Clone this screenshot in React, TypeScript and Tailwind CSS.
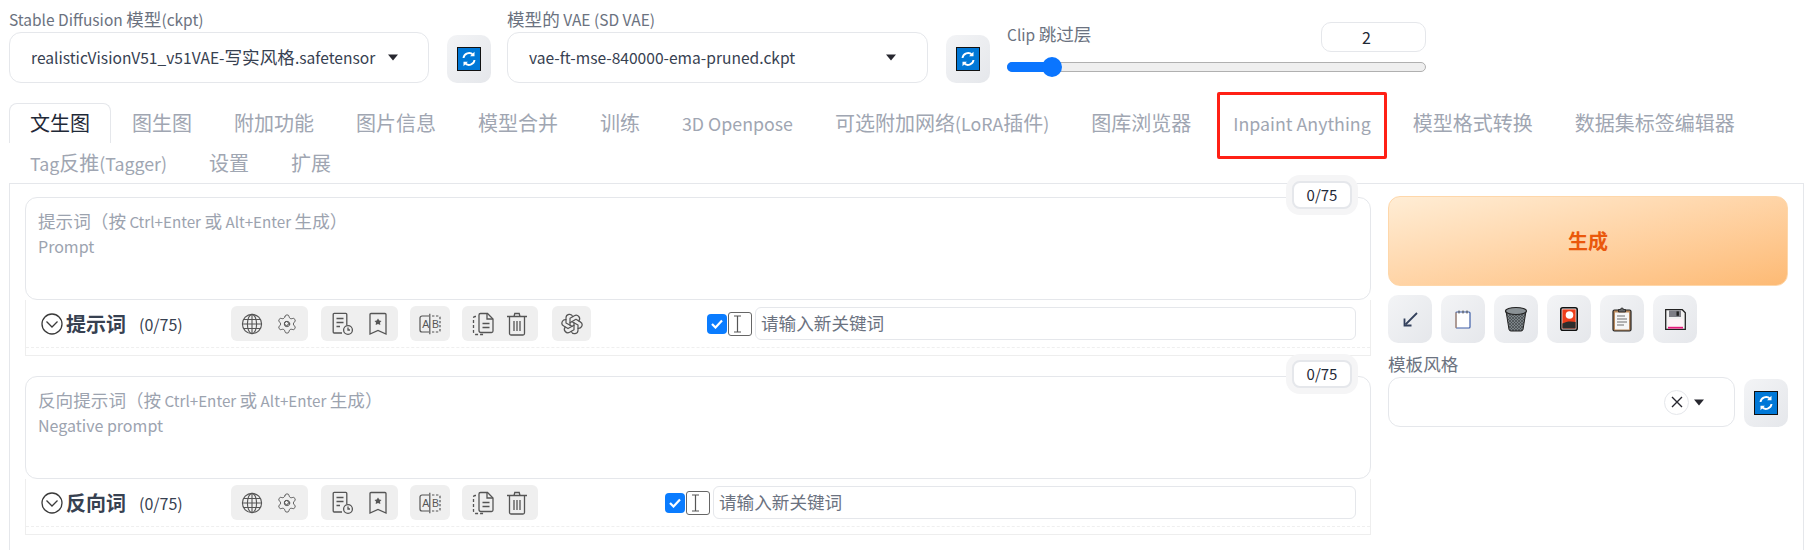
import React from "react";
import { TbBrandOpenai } from "react-icons/tb";
import { Settings } from "lucide-react";

const tabsRow = [
  "图生图",
  "附加功能",
  "图片信息",
  "模型合并",
  "训练",
  "3D Openpose",
  "可选附加网络(LoRA插件)",
  "图库浏览器",
];

// the screenshot's CJK glyphs run about 10% bigger than the latin ones
function Mixed({ text, cjk }: { text: string; cjk: string }) {
  const parts = text.split(/([\u3000-\u9fff\uff00-\uffef]+)/);
  return (
    <>
      {parts.map((part, i) =>
        i % 2 === 1 ? (
          <span key={i} className={cjk}>
            {part}
          </span>
        ) : (
          part
        ),
      )}
    </>
  );
}

function RefreshEmoji() {
  return (
    <svg width="24" height="24" viewBox="0 0 24 24">
      <rect x="0.5" y="0.5" width="23" height="23" fill="#0078d7" stroke="#111" />
      <path d="M6.5 11a5.6 5.6 0 0 1 9.6-3.2" fill="none" stroke="#fff" strokeWidth="1.9" />
      <path d="M17.5 4.8v4.4h-4.4z" fill="#fff" />
      <path d="M17.5 13a5.6 5.6 0 0 1-9.6 3.2" fill="none" stroke="#fff" strokeWidth="1.9" />
      <path d="M6.5 19.2v-4.4h4.4z" fill="#fff" />
    </svg>
  );
}

function Caret() {
  return (
    <svg width="12" height="7" viewBox="0 0 12 7">
      <path d="M1 0.5h10L6 6.5z" fill="#27272f" />
    </svg>
  );
}

function RefreshButton({ className }: { className: string }) {
  return (
    <button className={`flex h-[48px] w-[44px] shrink-0 items-center justify-center rounded-[10px] bg-gradient-to-br from-[#f3f4f6] to-[#e5e7eb] ${className}`}>
      <RefreshEmoji />
    </button>
  );
}

function GlobeIcon() {
  return (
    <svg width="22" height="22" viewBox="0 0 22 22" fill="none" stroke="#555" strokeWidth="1.1">
      <circle cx="11" cy="11" r="9.6" />
      <ellipse cx="11" cy="11" rx="4.6" ry="9.6" />
      <path d="M11 1.4v19.2M1.4 11h19.2M2.6 6.5h16.8M2.6 15.5h16.8" />
    </svg>
  );
}

function GearIcon() {
  return (
    <span className="relative flex h-[22px] w-[22px] items-center justify-center">
      <Settings size={26} strokeWidth={1} color="#555" />
      <span className="absolute h-[5px] w-[5px] rounded-full border border-[#555]" />
    </span>
  );
}

function HistoryIcon() {
  return (
    <svg width="22" height="24" viewBox="0 0 22 24" fill="none" stroke="#555" strokeWidth="1.3">
      <path d="M10 21H2.2a1 1 0 0 1-1-1V2.4a1 1 0 0 1 1-1h11.6a1 1 0 0 1 1 1V13" />
      <path d="M4.5 6.5h7M4.5 10.5h7M4.5 14.5h3.5" />
      <circle cx="16" cy="18" r="4.4" />
      <path d="M16 15.6V18h2" />
    </svg>
  );
}

function BookmarkIcon() {
  return (
    <svg width="18" height="24" viewBox="0 0 18 24" fill="none" stroke="#555" strokeWidth="1.3">
      <path d="M2 1.5h14a1 1 0 0 1 1 1V22l-8-3.6L1 22V2.5a1 1 0 0 1 1-1z" />
      <path d="M9 6.5l1.3 2 2.2.4-1.5 1.7.3 2.3-2.3-1-2.3 1 .3-2.3-1.5-1.7 2.2-.4z" fill="#555" stroke="none" />
    </svg>
  );
}

function AbIcon() {
  return (
    <svg width="22" height="22" viewBox="0 0 22 22" fill="none" stroke="#555" strokeWidth="1.2">
      <path d="M10 3H3a2 2 0 0 0-2 2v12a2 2 0 0 0 2 2h7" />
      <path d="M10.8 0.8v20.4" />
      <path d="M13 3h6.5a1.5 1.5 0 0 1 1.5 1.5v13a1.5 1.5 0 0 1-1.5 1.5H13" strokeDasharray="2.4 1.6" />
      <text x="3.2" y="14.8" fontSize="10.5" fontFamily="Liberation Sans" fill="#555" stroke="none">A</text>
      <text x="13" y="14.8" fontSize="10.5" fontFamily="Liberation Sans" fill="#555" stroke="none">B</text>
    </svg>
  );
}

function CopyIcon() {
  return (
    <svg width="22" height="24" viewBox="0 0 22 24" fill="none" stroke="#555" strokeWidth="1.3">
      <path d="M7 4.5V3a1.5 1.5 0 0 1 1.5-1.5h7L21 7v12a1.5 1.5 0 0 1-1.5 1.5H9A2 2 0 0 1 7 18.5V4.5z" />
      <path d="M15 1.5V7h6" />
      <path d="M4 4.5H3A1.5 1.5 0 0 0 1.5 6v14A2.5 2.5 0 0 0 4 22.5h9" strokeDasharray="3 2" />
      <path d="M10.5 11.5h7M10.5 15.5h7" />
    </svg>
  );
}

function TrashIcon() {
  return (
    <svg width="22" height="24" viewBox="0 0 22 24" fill="none" stroke="#555" strokeWidth="1.3">
      <path d="M1 4.5h20M8 4.5l.8-3h4.4l.8 3" />
      <path d="M3.5 4.5v17a1.5 1.5 0 0 0 1.5 1.5h12a1.5 1.5 0 0 0 1.5-1.5v-17" />
      <path d="M8 9v10M11 9v10M14 9v10" />
    </svg>
  );
}

function ArrowEmoji() {
  return (
    <svg width="15" height="15" viewBox="0 0 15 15" fill="none">
      <path d="M14 1L2.5 12.5" stroke="#33405c" strokeWidth="1.8" />
      <path d="M1.5 6.5V13.5H8.5" stroke="#33405c" strokeWidth="1.8" />
    </svg>
  );
}

function NotepadEmoji() {
  return (
    <svg width="16" height="19" viewBox="0 0 16 19" fill="none">
      <rect x="1" y="2" width="14" height="16" rx="1" fill="#fff" stroke="#3f5fa8" strokeWidth="1.2" />
      <path d="M1 18V2.5" stroke="#c79b73" strokeWidth="1.2" />
      <path d="M4 0.5v3M8 0.5v3M12 0.5v3" stroke="#444" strokeWidth="1" />
    </svg>
  );
}

function BasketEmoji() {
  return (
    <svg width="24" height="26" viewBox="0 0 24 26">
      <defs>
        <pattern id="mesh" width="3" height="3" patternUnits="userSpaceOnUse">
          <rect width="3" height="3" fill="#7d8488" />
          <path d="M0 0l3 3M3 0l-3 3" stroke="#3b3f42" strokeWidth="0.6" />
        </pattern>
      </defs>
      <path d="M2 5l3 18.5a2 2 0 0 0 2 1.5h10a2 2 0 0 0 2-1.5L22 5z" fill="url(#mesh)" stroke="#222" strokeWidth="1" />
      <ellipse cx="12" cy="5" rx="10.5" ry="3.5" fill="#8b9296" stroke="#222" strokeWidth="1.2" />
    </svg>
  );
}

function PictureEmoji() {
  return (
    <svg width="18" height="24" viewBox="0 0 18 24">
      <rect x="0.8" y="0.8" width="16.4" height="22.4" rx="2" fill="#e9eaec" stroke="#111" strokeWidth="1.6" />
      <rect x="2.4" y="2.4" width="13.2" height="19.2" fill="#ee3f1c" />
      <circle cx="9.5" cy="8" r="3.8" fill="#fff" />
      <path d="M2.4 16.5c4-2.5 9-2.5 13.2-1.5v6.6H2.4z" fill="#2d2d2d" />
    </svg>
  );
}

function ClipboardEmoji() {
  return (
    <svg width="20" height="25" viewBox="0 0 20 25">
      <rect x="1" y="3" width="18" height="21" rx="1.5" fill="#b98a5e" stroke="#222" strokeWidth="1.2" />
      <rect x="3" y="5.5" width="14" height="17" fill="#f6f6f6" />
      <path d="M6.5 4V2.5h2a1.5 1.5 0 0 1 3 0h2V5h-7z" fill="#666" stroke="#222" strokeWidth="0.8" />
      <path d="M5 9h8M5 12h10M5 15h10M5 18h7" stroke="#6d6d6d" strokeWidth="1.1" />
    </svg>
  );
}

function FloppyEmoji() {
  return (
    <svg width="21" height="21" viewBox="0 0 21 21">
      <path d="M0.7 0.7h16.6l3 3v16.6H0.7z" fill="#f2f2f2" stroke="#222" strokeWidth="1.3" />
      <rect x="4" y="1.4" width="12" height="6.6" fill="#7e7e86" />
      <rect x="11.5" y="2.4" width="2.4" height="4.4" fill="#222" />
      <rect x="3" y="10" width="15" height="9.6" fill="#fdf2f6" />
      <rect x="3" y="17.8" width="15" height="1.8" fill="#e4177a" />
    </svg>
  );
}

const emojiButtons = [
  <ArrowEmoji key="arrow" />,
  <NotepadEmoji key="notepad" />,
  <BasketEmoji key="basket" />,
  <PictureEmoji key="picture" />,
  <ClipboardEmoji key="clipboard" />,
  <FloppyEmoji key="floppy" />,
];

function ToolGroup({ children, w }: { children: React.ReactNode; w: string }) {
  return (
    <div className={`flex h-[35px] items-center justify-around rounded-md bg-[#efefef] px-[4px] ${w}`}>
      {children}
    </div>
  );
}

function PromptBlock({
  label,
  placeholder,
  hint,
  keywordOffset,
  withOpenai,
}: {
  label: string;
  placeholder: string;
  hint: string;
  keywordOffset: string;
  withOpenai: boolean;
}) {
  return (
    <div className="relative">
      <div className="h-[103px] rounded-xl border border-[#e5e7eb] bg-white px-[12px] pt-[10px] text-[16px] leading-[25px] text-[#9ca3af]">
        <div className="text-[15.2px]">
          <Mixed text={placeholder} cjk="text-[17.6px]" />
        </div>
        <div>{hint}</div>
      </div>
      <div className="absolute right-[13px] top-[-22px] rounded-[14px] bg-[#f5f5f6] p-[6px]">
        <div className="flex h-[28px] w-[60px] items-center justify-center rounded-lg border-2 border-[#e5e7eb] bg-white text-[15px] text-[#1f2937]">
          0/75
        </div>
      </div>
      <div className="h-[56px] border border-t-0 border-[#eeeeee]">
        <div className="flex h-[48px] items-center border-b border-dashed border-[#efefef] pl-[15px]">
          <svg width="22" height="22" viewBox="0 0 22 22" fill="none" stroke="#3a3a3a" strokeWidth="1.3" className="shrink-0">
            <circle cx="11" cy="11" r="10" />
            <path d="M5.5 8.5L11 14l5.500-5.500" />
          </svg>
          <span className="ml-[3px] w-[73px] text-[20px] font-bold leading-none text-[#374151]">{label}</span>
          <span className="w-[92px] text-[16px] text-[#374151]">(0/75)</span>
          <ToolGroup w="w-[77px]">
            <GlobeIcon />
            <GearIcon />
          </ToolGroup>
          <div className="w-[13px]" />
          <ToolGroup w="w-[77px]">
            <HistoryIcon />
            <BookmarkIcon />
          </ToolGroup>
          <div className="w-[12px]" />
          <ToolGroup w="w-[40px]">
            <AbIcon />
          </ToolGroup>
          <div className="w-[12px]" />
          <ToolGroup w="w-[76px]">
            <CopyIcon />
            <TrashIcon />
          </ToolGroup>
          {withOpenai && <div className="w-[14px]" />}
          {withOpenai && (
            <ToolGroup w="w-[39px]">
              <TbBrandOpenai size={24} strokeWidth={1.2} color="#555" />
            </ToolGroup>
          )}
          <div className={`flex flex-1 items-center pr-[14px] ${keywordOffset}`}>
            <span className="flex h-[20px] w-[20px] items-center justify-center rounded-[4px] bg-[#0a7cff]">
              <svg width="12" height="10" viewBox="0 0 12 10" fill="none" stroke="#fff" strokeWidth="2.2">
                <path d="M1 5l3.5 3.5L11 1.5" />
              </svg>
            </span>
            <span className="ml-[1px] flex h-[24px] w-[24px] items-center rounded-[3px] border border-[#666] pl-[4px]">
              <svg width="9" height="18" viewBox="0 0 9 18" fill="none" stroke="#555" strokeWidth="1.2">
                <path d="M1 1h7M1 17h7M4.5 1v16" />
              </svg>
            </span>
            <div className="ml-[3px] flex h-[33px] flex-1 items-center rounded-md border border-[#e5e7eb] bg-white pl-[5px] text-[17.6px] text-[#6b7280]">
              请输入新关键词
            </div>
          </div>
        </div>
      </div>
    </div>
  );
}

export default function App() {
  return (
    <div className="h-[550px] w-[1816px] overflow-hidden bg-white font-['Noto_Sans_CJK_SC','Noto_Sans',sans-serif]">
      <div className="flex h-[103px] pl-[9px]">
        <div className="w-[420px] pt-[10px]">
          <div className="h-[22px] whitespace-nowrap text-[15.5px] leading-[18px] text-[#6b7280]">
            <Mixed text="Stable Diffusion 模型(ckpt)" cjk="text-[17.6px]" />
          </div>
          <div className="flex h-[51px] items-center rounded-xl border border-[#e5e7eb] pl-[21px] pr-[30px] text-[15.6px] text-[#374151]">
            <span className="w-[345px] whitespace-nowrap">
              <Mixed text="realisticVisionV51_v51VAE-写实风格.safetensor" cjk="text-[17.6px]" />
            </span>
            <span className="ml-[12px]"><Caret /></span>
          </div>
        </div>
        <RefreshButton className="ml-[18px] mt-[35px]" />
        <div className="ml-[16px] w-[421px] pt-[10px]">
          <div className="h-[22px] whitespace-nowrap text-[15.5px] leading-[18px] text-[#6b7280]">
            <Mixed text="模型的 VAE (SD VAE)" cjk="text-[17.6px]" />
          </div>
          <div className="flex h-[51px] items-center justify-between rounded-xl border border-[#e5e7eb] pl-[21px] pr-[30px] text-[15.6px] text-[#374151]">
            <span>vae-ft-mse-840000-ema-pruned.ckpt</span>
            <Caret />
          </div>
        </div>
        <RefreshButton className="ml-[18px] mt-[35px]" />
        <div className="ml-[17px] w-[419px] pt-[22px]">
          <div className="flex h-[30px] justify-between">
            <span className="mt-[1px] text-[15.5px] leading-[22px] text-[#6b7280]">
              <Mixed text="Clip 跳过层" cjk="text-[17.6px]" />
            </span>
            <div className="flex w-[105px] items-center justify-center rounded-[10px] border border-[#e5e7eb] pr-[14px] text-[16px] text-[#1f2937]">2</div>
          </div>
          <div className="relative mt-[10px] h-[10px] rounded-full border border-[#b0b0b0] bg-[#efefef]">
            <div className="absolute left-[-1px] top-[-1px] h-[10px] w-[44px] rounded-l-full bg-[#0a75ff]" />
            <div className="absolute left-[34px] top-[-6px] h-[20px] w-[20px] rounded-full bg-[#0a75ff]" />
          </div>
        </div>
      </div>

      <div className="flex flex-wrap pl-[9px] text-[17.8px] leading-[40px] text-[#a0a6b2]">
        <div className="h-[40px] rounded-t-lg border border-b-0 border-[#e5e7eb] px-[20px] text-[20px] leading-[38px] text-[#1f2937]">文生图</div>
        {tabsRow.map((tab) => (
          <div key={tab} className="h-[40px] whitespace-nowrap px-[21px]">
            <Mixed text={tab} cjk="text-[20px]" />
          </div>
        ))}
        <div className="relative h-[40px] whitespace-nowrap px-[21px]">
          Inpaint Anything
          <div className="absolute bottom-[-16px] left-[5px] right-[5px] top-[-11px] rounded-[2px] border-[3px] border-[#ff2015]" />
        </div>
        <div className="h-[40px] whitespace-nowrap px-[21px] text-[20px]">模型格式转换</div>
        <div className="h-[40px] whitespace-nowrap px-[21px] text-[20px]">数据集标签编辑器</div>
        <div className="h-[40px] whitespace-nowrap px-[21px]">
          <Mixed text="Tag反推(Tagger)" cjk="text-[20px]" />
        </div>
        <div className="h-[40px] whitespace-nowrap px-[21px] text-[20px]">设置</div>
        <div className="h-[40px] whitespace-nowrap px-[21px] text-[20px]">扩展</div>
      </div>

      <div className="ml-[9px] flex h-[400px] w-[1795px] border border-[#e5e7eb] pl-[15px] pt-[13px]">
        <div className="flex w-[1346px] flex-col gap-[20px]">
          <PromptBlock
            label="提示词"
            placeholder="提示词（按 Ctrl+Enter 或 Alt+Enter 生成）"
            hint="Prompt"
            keywordOffset="ml-[116px]"
            withOpenai
          />
          <PromptBlock
            label="反向词"
            placeholder="反向提示词（按 Ctrl+Enter 或 Alt+Enter 生成）"
            hint="Negative prompt"
            keywordOffset="ml-[127px]"
            withOpenai={false}
          />
        </div>
        <div className="-mt-[1px] ml-[17px] w-[400px]">
          <button className="flex h-[90px] w-full items-center justify-center rounded-xl border border-[#fed7aa] bg-gradient-to-br from-[#ffedd5] to-[#fdba74] text-[20px] font-bold text-[#ea580c]">
            生成
          </button>
          <div className="mt-[9px] flex gap-[9px]">
            {emojiButtons.map((icon) => (
              <button key={icon.key} className="flex h-[48px] w-[44px] items-center justify-center rounded-[10px] bg-gradient-to-br from-[#f3f4f6] to-[#e5e7eb]">
                {icon}
              </button>
            ))}
          </div>
          <div className="mt-[8px] h-[26px] text-[17.6px] leading-[26px] text-[#6b7280]">模板风格</div>
          <div className="flex items-end">
            <div className="flex h-[50px] w-[347px] items-center justify-end rounded-xl border border-[#e5e7eb] pr-[29px]">
              <span className="flex h-[25px] w-[25px] items-center justify-center rounded-full border border-[#e5e7eb]">
                <svg width="12" height="12" viewBox="0 0 12 12" fill="none" stroke="#27272f" strokeWidth="1.4">
                  <path d="M1 1l10 10M11 1L1 11" />
                </svg>
              </span>
              <span className="ml-[4px] flex"><Caret /></span>
            </div>
            <RefreshButton className="ml-[9px]" />
          </div>
        </div>
      </div>
    </div>
  );
}
